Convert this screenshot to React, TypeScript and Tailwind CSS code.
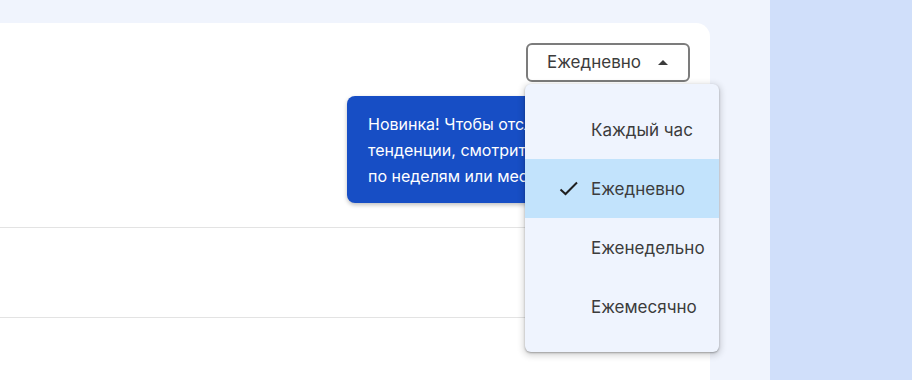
import React from 'react'

const options = ['Каждый час', 'Ежедневно', 'Еженедельно', 'Ежемесячно']

function Check() {
    return (
        <svg width="24" height="24" viewBox="0 0 24 24" className="absolute left-[32px] top-1/2 -translate-y-1/2">
            <path d="M3.5 12.5 L8.5 17 L20 5.5" fill="none" stroke="#1f1f1f" strokeWidth="2" />
        </svg>
    )
}

export default function App() {
    const selected = 'Ежедневно'

    return (
        <div className="flex w-[912px] h-[380px] overflow-hidden bg-[#f0f4fd] font-['Inter','Noto_Sans',sans-serif]">
            <div className="w-[770px] pt-[23px]">
                <div className="relative w-[710px] h-full bg-white rounded-tr-[14px]">
                    <div className="h-[205px] flex justify-end pt-5 pr-5 border-b border-[#e3e3e3]">
                        <button className="flex items-center w-[164px] h-[39px] pl-[19px] pr-5 border-2 border-[#7c7c7c] rounded-[6px] text-[17px] text-[#3c3c3c]">
                            <span>{selected}</span>
                            <svg width="10" height="5" viewBox="0 0 10 5" className="ml-auto">
                                <path d="M0 5 L5 0 L10 5 Z" fill="#3c3c3c" />
                            </svg>
                        </button>
                    </div>
                    <div className="h-[90px] border-b border-[#e3e3e3]" />
                    <div className="h-[60px]" />

                    {/* tooltip */}
                    <div className="absolute left-[347px] top-[73px] w-[260px] h-[107px] rounded-[8px] bg-[#174ec5] text-white text-[16px] leading-[26px] pl-[21px] pt-[15px] whitespace-nowrap shadow-[0_2px_4px_rgba(0,0,0,0.25)]">
                        Новинка! Чтобы отслеживать
                        <br />
                        тенденции, смотрите данные
                        <br />
                        по неделям или месяцам.
                    </div>

                    {/* menu */}
                    <div className="absolute left-[525px] top-[61px] w-[194px] py-4 rounded-[6px] bg-[#eff4fe] shadow-[0_1px_2px_rgba(0,0,0,0.3),0_2px_6px_2px_rgba(0,0,0,0.15)]">
                        {options.map((o) => (
                            <div
                                key={o}
                                className={
                                    o === selected
                                        ? 'relative flex items-center h-[59px] pl-[66px] pt-[2px] text-[17px] text-[#3c3c3c] bg-[#c2e3fc]'
                                        : 'relative flex items-center h-[59px] pl-[66px] pt-[2px] text-[17px] text-[#3c3c3c]'
                                }
                            >
                                {o === selected && <Check />}
                                {o}
                            </div>
                        ))}
                    </div>
                </div>
            </div>
            <div className="flex-1 bg-[#d0dffa]" />
        </div>
    )
}
